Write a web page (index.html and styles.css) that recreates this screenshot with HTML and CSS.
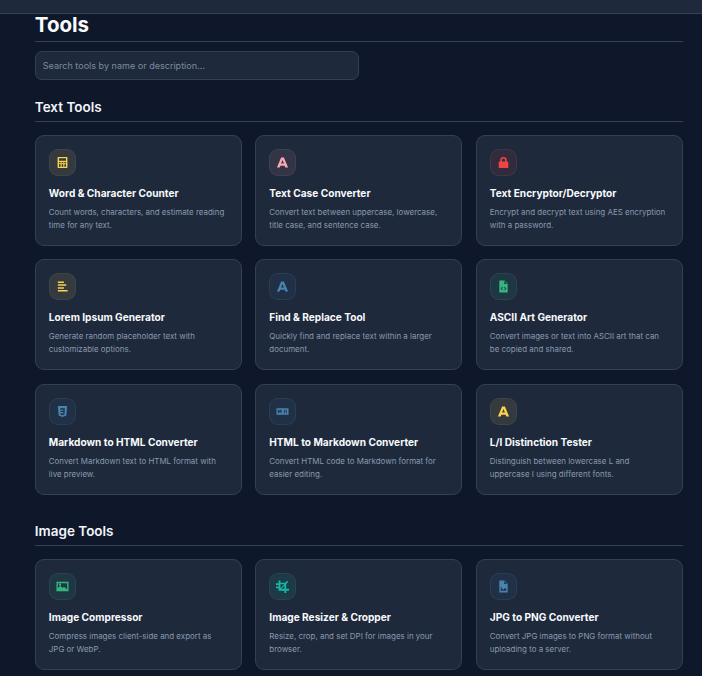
FILE: index.html
```html
<!DOCTYPE html>
<html lang="en">
<head>
<meta charset="utf-8">
<title>Tools</title>
<link rel="stylesheet" href="styles.css">
</head>
<body>
<header class="topbar"></header>
<main class="page">
  <h1 class="page-title">Tools</h1>
  <input class="search" type="text" placeholder="Search tools by name or description...">

  <section class="group">
    <h2 class="group-title">Text Tools</h2>
    <div class="grid">
      <a class="card">
        <span class="icon tint-yellow"><svg viewBox="0 0 14 14"><path fill-rule="evenodd" d="M2.500 1h9a.8.8 0 0 1 .8.8v10.400a.8.8 0 0 1-.8.8h-9a.8.8 0 0 1-.8-.8V1.800a.8.8 0 0 1 .8-.8zM3.200 2.500v2.600h7.600V2.500zM3.200 6.400v1.500h1.800V6.400zm2.900 0v1.500h1.800V6.400zm2.900 0v1.500h1.800V6.400zM3.200 9v2.500h1.800V9zm2.900 0v2.500h1.800V9zm2.900 0v2.500h1.800V9z"/></svg></span>
        <h3>Word &amp; Character Counter</h3>
        <p>Count words, characters, and estimate reading time for any text.</p>
      </a>
      <a class="card">
        <span class="icon tint-pink"><svg viewBox="0 0 14 14"><path d="M5.500 1.500h3L13 12.500h-3l-.7-2H4.700l-.7 2H1zM5.500 8.200h3L7 4.200z" fill-rule="evenodd"/></svg></span>
        <h3>Text Case Converter</h3>
        <p>Convert text between uppercase, lowercase, title case, and sentence case.</p>
      </a>
      <a class="card">
        <span class="icon tint-red"><svg viewBox="0 0 14 14"><path fill-rule="evenodd" d="M3.500 6V4.500a3.500 3.500 0 0 1 7 0V6h.7a1 1 0 0 1 1 1v5a1 1 0 0 1-1 1H2.800a1 1 0 0 1-1-1V7a1 1 0 0 1 1-1zM5.300 6h3.400V4.500a1.700 1.700 0 0 0-3.400 0z"/></svg></span>
        <h3>Text Encryptor/Decryptor</h3>
        <p>Encrypt and decrypt text using AES encryption with a password.</p>
      </a>
      <a class="card">
        <span class="icon tint-yellow"><svg viewBox="0 0 14 14"><path d="M2 1.500h6.500v1.700H2zM2 4.600h9v1.700H2zM2 7.700h6.500v1.700H2zM2 10.800h10.500v1.700H2z"/></svg></span>
        <h3>Lorem Ipsum Generator</h3>
        <p>Generate random placeholder text with customizable options.</p>
      </a>
      <a class="card">
        <span class="icon tint-blue"><svg viewBox="0 0 14 14"><path d="M5.500 1.500h3L13 12.500h-3l-.7-2H4.700l-.7 2H1zM5.500 8.200h3L7 4.200z" fill-rule="evenodd"/></svg></span>
        <h3>Find &amp; Replace Tool</h3>
        <p>Quickly find and replace text within a larger document.</p>
      </a>
      <a class="card">
        <span class="icon tint-green"><svg viewBox="0 0 14 14"><path fill-rule="evenodd" d="M2.500.5H8l3.500 3.500v9.500h-9zM7.800 1.200v3h3zM5.800 7.300 3.900 9.200l1.900 1.900.6-.6-1.300-1.300 1.300-1.300zm2.400 0-.6.6 1.300 1.300-1.300 1.300.6.600 1.900-1.900z"/></svg></span>
        <h3>ASCII Art Generator</h3>
        <p>Convert images or text into ASCII art that can be copied and shared.</p>
      </a>
      <a class="card">
        <span class="icon tint-blue"><svg viewBox="0 0 14 14"><path fill-rule="evenodd" d="M2 1h10l-.9 10.400L7 13l-4.100-1.600zM4.500 3.500l.2 1.500h3.500L8 6.300H4.900l.1 1.300h2.900l-.1 1.500-.8.400-.9-.4-.1-.6H4.800l.1 1.600L7 11l2.100-.9.400-6.600z"/></svg></span>
        <h3>Markdown to HTML Converter</h3>
        <p>Convert Markdown text to HTML format with live preview.</p>
      </a>
      <a class="card">
        <span class="icon tint-blue"><svg viewBox="0 0 14 14"><path fill-rule="evenodd" d="M.5 3.500h13v7H.500zM2 5v4h1V7l1 1 1-1v2h1V5H5L4 6.200 3 5zm6.500 0v4h1V5zm2 0v4h1V5z"/></svg></span>
        <h3>HTML to Markdown Converter</h3>
        <p>Convert HTML code to Markdown format for easier editing.</p>
      </a>
      <a class="card">
        <span class="icon tint-yellow"><svg viewBox="0 0 14 14"><path d="M5.500 1.500h3L13 12.500h-3l-.7-2H4.700l-.7 2H1zM5.500 8.200h3L7 4.200z" fill-rule="evenodd"/></svg></span>
        <h3>L/I Distinction Tester</h3>
        <p>Distinguish between lowercase L and uppercase I using different fonts.</p>
      </a>
    </div>
  </section>

  <section class="group">
    <h2 class="group-title">Image Tools</h2>
    <div class="grid">
      <a class="card">
        <span class="icon tint-green"><svg viewBox="0 0 14 14"><path fill-rule="evenodd" d="M.5 2h13v10H.500zM2 8.800 4.600 6.200l2.400 2.400 1.600-1.300L12 10.300V3.500H2zM4.300 3.900a1.200 1.200 0 1 1 0 2.400 1.200 1.200 0 0 1 0-2.400z"/></svg></span>
        <h3>Image Compressor</h3>
        <p>Compress images client-side and export as JPG or WebP.</p>
      </a>
      <a class="card">
        <span class="icon tint-teal"><svg viewBox="0 0 14 14"><path fill-rule="evenodd" d="M2.800.5h2V3h5l2.100-2.100 1.200 1.200L11 4.200v5.300h3v2h-3V14H9v-2.500H2.800V9H0V7h2.800V5.500H0v-2h2.800zM4.800 4.500v4.300L9 4.500zM5.800 9.500H9V6.200z"/></svg></span>
        <h3>Image Resizer &amp; Cropper</h3>
        <p>Resize, crop, and set DPI for images in your browser.</p>
      </a>
      <a class="card">
        <span class="icon tint-blue"><svg viewBox="0 0 14 14"><path fill-rule="evenodd" d="M2.500.5H8l3.500 3.500v9.500h-9zM7.800 1.200v3h3zM4 7.500v4h6V9.800L8.700 8.500l-2 2-1-1-.7.700V7.500z"/></svg></span>
        <h3>JPG to PNG Converter</h3>
        <p>Convert JPG images to PNG format without uploading to a server.</p>
      </a>
    </div>
  </section>
</main>
</body>
</html>
```

FILE: styles.css
```css
* { box-sizing: border-box; }

html, body {
  margin: 0;
  height: 100%;
  overflow: hidden;
}

body {
  background: #0f172a;
  color: #f1f5f9;
  font-family: Inter, "Liberation Sans", sans-serif;
}

.topbar {
  height: 14px;
  background: #1e293b;
  border-bottom: 1px solid #334155;
}

.page {
  padding: 0 19.200px 0 34.800px;
}

.page-title {
  margin: 0;
  height: 27.500px;
  font-size: 20.500px;
  line-height: 22px;
  font-weight: 700;
  color: #f8fafc;
  border-bottom: 1px solid #334155;
}

.search {
  display: block;
  width: 324px;
  height: 29px;
  margin: 9.500px 0 0;
  padding: 0 7px;
  background: #1e293b;
  border: 1px solid #334155;
  border-radius: 7px;
  color: #f1f5f9;
  font: 400 9.050px Inter, "Liberation Sans", sans-serif;
  outline: none;
}

.search::placeholder { color: #7c8aa0; opacity: 1; }

.group { margin-top: 19px; }
.group + .group { margin-top: 28.500px; }

.group-title {
  margin: 0 0 12.600px;
  height: 23px;
  font-size: 13.500px;
  line-height: 16px;
  font-weight: 600;
  color: #f1f5f9;
  border-bottom: 1px solid #334155;
}

.grid {
  display: grid;
  grid-template-columns: repeat(3, 1fr);
  gap: 13.500px;
}

.card {
  display: block;
  height: 111px;
  padding: 13px;
  background: #1e293b;
  border: 1px solid #334155;
  border-radius: 9px;
}

.icon {
  display: flex;
  align-items: center;
  justify-content: center;
  width: 27px;
  height: 27px;
  border-radius: 9px;
  border: 1px solid rgba(148, 163, 184, .1);
}

.icon svg { width: 13px; height: 13px; fill: currentColor; }

.tint-yellow { color: #fcd34d; background: rgba(252, 211, 77, .1); }
.tint-pink   { color: #f9a8b4; background: rgba(249, 168, 180, .1); }
.tint-red    { color: #ef4444; background: rgba(239, 68, 68, .1); }
.tint-blue   { color: #4a83ad; background: rgba(56, 130, 180, .1); }
.tint-green  { color: #34b77f; background: rgba(52, 183, 127, .1); }
.tint-teal   { color: #14b8a6; background: rgba(20, 184, 166, .12); }

.card h3 {
  margin: 10px 0 0;
  font-size: 10.150px;
  line-height: 14px;
  font-weight: 700;
  color: #f8fafc;
}

.card p {
  margin: 6px 0 0;
  font-size: 7.950px;
  line-height: 13px;
  color: #8a99b0;
}
```
